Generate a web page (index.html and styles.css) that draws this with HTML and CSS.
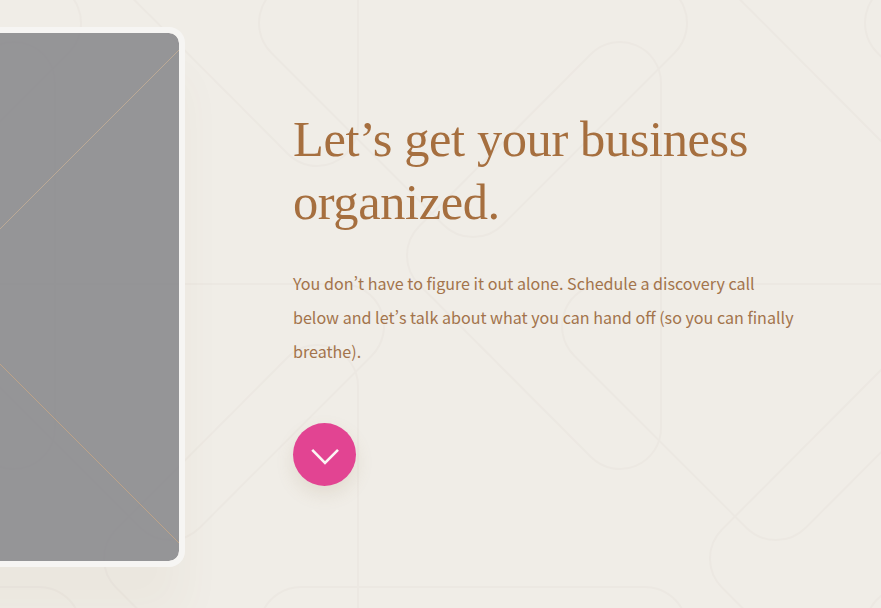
FILE: index.html
```html
<!DOCTYPE html>
<html lang="en">
<head>
<meta charset="utf-8">
<title>Let's get your business organized</title>
<link rel="stylesheet" href="styles.css">
</head>
<body>
<main class="page">
  <svg class="pattern" width="881" height="608" viewBox="0 0 881 608" aria-hidden="true">
    <defs>
      <g id="tile">
        <path d="M301,-19 H645 A42 42 0 0 1 674.7,52.7 L502.7,224.7 A42 42 0 0 1 443.3,224.7 L271.3,52.7 A42 42 0 0 1 301,-19 Z"/>
        <path d="M591,54 A41 41 0 0 1 661,83 V428 A41 41 0 0 1 591,457 L419,284.5 A41 41 0 0 1 419,226.5 Z"/>
      </g>
    </defs>
    <use href="#tile" x="0" y="0"/>
    <use href="#tile" x="606" y="0"/>
    <use href="#tile" x="-606" y="0"/>
    <use href="#tile" x="303" y="303"/>
    <use href="#tile" x="-303" y="303"/>
    <use href="#tile" x="909" y="303"/>
    <use href="#tile" x="-909" y="303"/>
    <use href="#tile" x="303" y="-303"/>
    <use href="#tile" x="-303" y="-303"/>
    <use href="#tile" x="909" y="-303"/>
    <use href="#tile" x="0" y="606"/>
    <use href="#tile" x="606" y="606"/>
    <use href="#tile" x="-606" y="606"/>
  </svg>

  <figure class="card">
    <svg class="placeholder" width="493" height="528" viewBox="0 0 493 528" aria-hidden="true">
      <path class="cross-a" d="M493,17 L0,510"/>
      <path class="cross-b" d="M0,17 L493,510"/>
    </svg>
  </figure>

  <section class="content">
    <h1 class="title">Let’s get your business organized.</h1>
    <p class="lead">You don’t have to figure it out alone. Schedule a discovery call below and let’s talk about what you can hand off (so you can finally breathe).</p>
    <a class="scroll-btn" href="#" aria-label="Scroll down">
      <svg width="30" height="20" viewBox="0 0 30 20" aria-hidden="true">
        <path d="M2.2,4.8 L15,18 L28,4.8"/>
      </svg>
    </a>
  </section>
</main>
</body>
</html>
```

FILE: styles.css
```css
* { box-sizing: border-box; }

html, body {
  margin: 0;
  padding: 0;
}

.page {
  position: relative;
  width: 881px;
  height: 608px;
  overflow: hidden;
  display: flex;
  align-items: flex-start;
  background: #f0ede7;
}

.pattern {
  position: absolute;
  inset: 0;
  fill: none;
  stroke: #ece8e2;
  stroke-width: 2;
}

.card {
  position: relative;
  flex: none;
  width: 505px;
  height: 540px;
  margin: 27px 0 0 -320px;
  border: 6px solid #f6f5f3;
  border-radius: 16px;
  background: rgba(126, 126, 131, 0.8);
  background-clip: padding-box;
  box-shadow: 0 50px 44px rgba(120, 90, 50, 0.04);
  overflow: hidden;
}

.placeholder {
  display: block;
  fill: none;
  stroke-width: 1;
}

.cross-a { stroke: #bba996; }
.cross-b { stroke: #bda388; }

.content {
  position: relative;
  flex: none;
  width: 510px;
  margin-left: 108px;
  padding-top: 108px;
}

.title {
  margin: 0;
  font-family: "Liberation Serif", serif;
  font-size: 50.5px;
  font-weight: 400;
  letter-spacing: -0.4px;
  line-height: 63px;
  color: #a66f3f;
}

.lead {
  margin: 32px 0 0;
  font-family: "Noto Sans CJK SC", "Noto Sans", sans-serif;
  font-size: 16.1px;
  font-variant-east-asian: proportional-width;
  line-height: 34px;
  color: #a3744c;
}

.scroll-btn {
  display: flex;
  align-items: center;
  justify-content: center;
  width: 63px;
  height: 63px;
  margin-top: 55px;
  border-radius: 50%;
  background: #e24492;
  box-shadow: 0 8px 18px rgba(150, 120, 80, 0.15);
}

.scroll-btn svg {
  display: block;
  fill: none;
  stroke: #fbf6f4;
  stroke-width: 2.6;
}
```
